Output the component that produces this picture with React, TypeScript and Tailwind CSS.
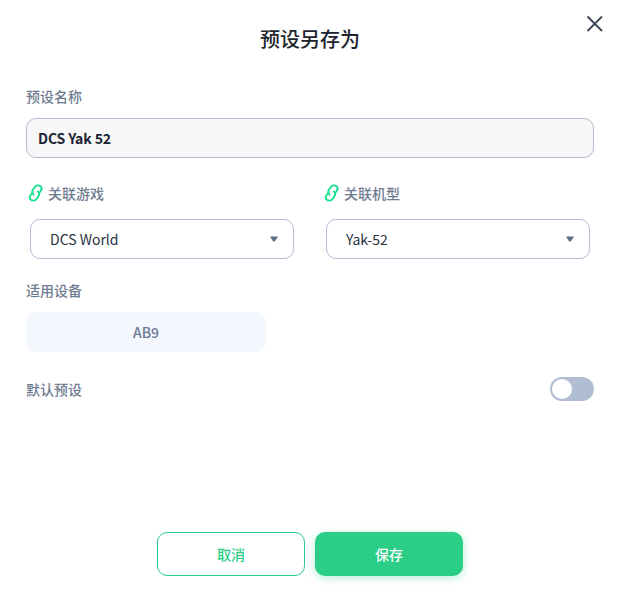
import React from 'react';

function LinkIcon() {
  return (
    <svg width="16" height="18" viewBox="0 0 16 18" fill="none" stroke="#14e090" strokeWidth="1.9" strokeLinecap="round" strokeLinejoin="round" className="shrink-0">
      <path d="M5.4 10.6 C3.8 9 4 7 5.4 5 L7 2.9 C8.5 1.2 11 1 12.5 2.2 C14 3.5 13.8 5.6 12.6 7.2 L11.4 8.8" />
      <path d="M10 7.4 C11.6 9 11.4 11 10 13 L8.4 15.1 C6.9 16.8 4.4 17 2.9 15.8 C1.4 14.5 1.6 12.4 2.8 10.8 L4 9.2" />
    </svg>
  );
}

function GameSelect({ label, value }: { label: string; value: string }) {
  return (
    <div className="w-[268px]">
      <div className="flex items-center h-5 gap-1 pl-[2px] text-sm font-medium text-[#6f7c8f]">
        <LinkIcon />
        <span>{label}</span>
      </div>
      <div className="mt-4 ml-1 h-10 flex items-center justify-between rounded-[10px] border border-[#b0bdd3] bg-white pl-[19px] pr-[15px]">
        <span className="text-sm text-[#29323f]">{value}</span>
        <svg width="8" height="6" viewBox="0 0 8 6" fill="#5f6f8a" className="-mt-px">
          <path d="M0 0.5 H8 L4.8 5.5 H3.2 Z" />
        </svg>
      </div>
    </div>
  );
}

export default function App() {
  return (
    <div className="relative w-[620px] h-[595px] bg-white overflow-hidden flex flex-col px-[26px] font-['Noto_Sans_CJK_SC','Noto_Sans',sans-serif]">
      <button className="absolute right-[16px] top-[15px] text-[#3d4759]">
        <svg width="18" height="18" viewBox="0 0 18 18" fill="none" stroke="currentColor" strokeWidth="1.9">
          <path d="M1.5 1.5 L16 16 M16 1.5 L1.5 16" />
        </svg>
      </button>

      <h1 className="mt-[25px] h-7 text-center text-xl leading-7 font-medium text-[#1e2530]">预设另存为</h1>

      <div className="mt-[33px] h-5 text-sm leading-5 font-medium text-[#6f7c8f]">预设名称</div>
      <div className="mt-[12px] h-10 flex items-center rounded-[10px] border border-[#b0bdd3] bg-[#f7f7f7] px-[11px] text-sm font-bold tracking-[-0.1px] text-[#1b2433]">
        DCS Yak 52
      </div>

      <div className="mt-[25px] flex gap-7">
        <GameSelect label="关联游戏" value="DCS World" />
        <GameSelect label="关联机型" value="Yak-52" />
      </div>

      <div className="mt-[21px] h-5 text-sm leading-5 font-medium text-[#6f7c8f]">适用设备</div>
      <div className="mt-[12px] w-[240px] h-10 flex items-center justify-center rounded-[10px] bg-[#f4f7fe] text-sm font-medium text-[#6b7a94]">
        AB9
      </div>

      <div className="mt-[25px] h-6 flex items-center justify-between">
        <span className="text-sm font-medium text-[#6f7c8f]">默认预设</span>
        <div className="w-11 h-6 rounded-full bg-[#b0bdd3] flex items-center pl-[2px]">
          <div className="w-5 h-5 rounded-full bg-white" />
        </div>
      </div>

      <div className="mt-[131px] flex justify-center gap-[10px]">
        <button className="w-[148px] h-11 rounded-[10px] border border-[#2ace86] bg-white text-sm font-medium text-[#2ace86]">取消</button>
        <button className="w-[148px] h-11 rounded-[10px] bg-[#2ace86] text-sm font-medium text-white shadow-[0_2px_8px_rgba(42,206,134,0.35)]">保存</button>
      </div>
    </div>
  );
}
